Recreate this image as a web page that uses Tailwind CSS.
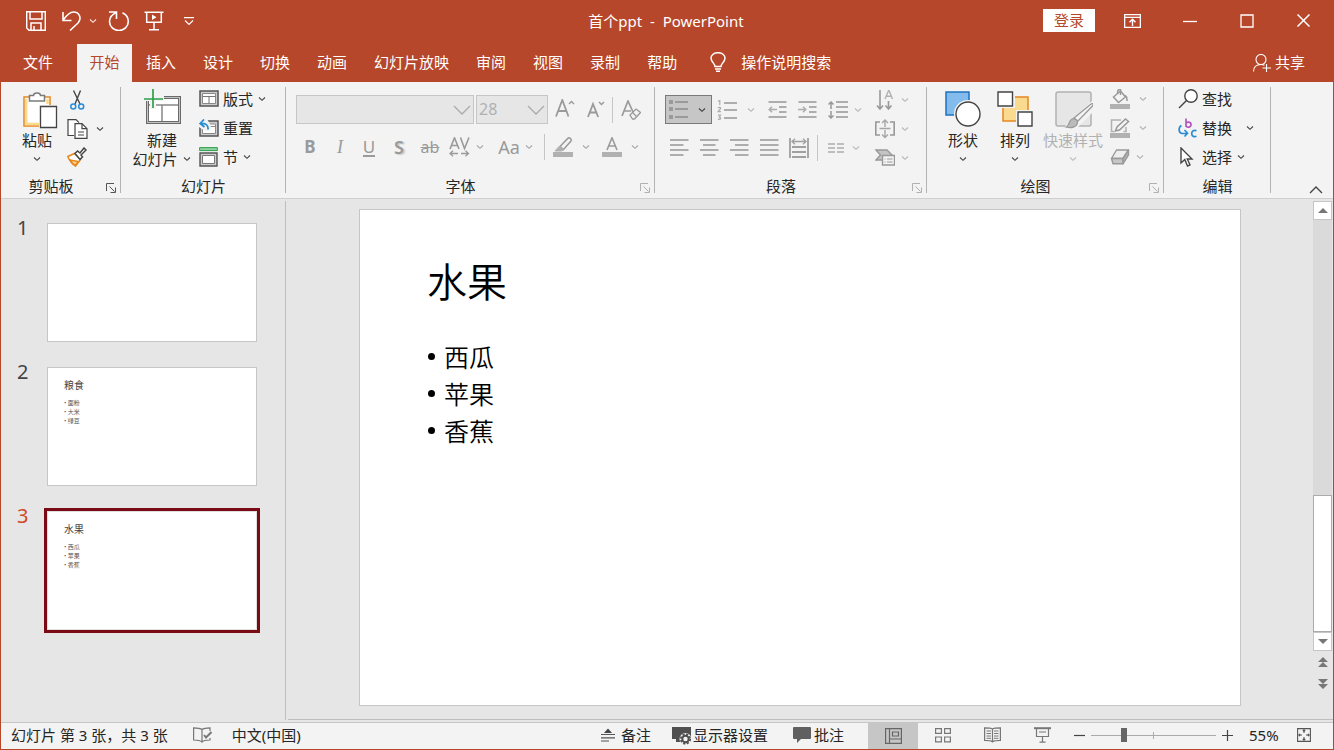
<!DOCTYPE html>
<html lang="zh-CN">
<head>
<meta charset="utf-8">
<title>首个ppt - PowerPoint</title>
<script src="https://cdn.jsdelivr.net/npm/@tailwindcss/browser@4"></script>
</head>
<body class="min-h-screen flex flex-col bg-[#e6e6e6] font-['Noto_Sans','Noto_Sans_CJK_SC',sans-serif] text-[15px] leading-5 text-[#262626]">

<svg class="hidden">
  <symbol id="chev" viewBox="0 0 10 6"><path d="M2 1.500 5 4.300 8 1.500" fill="none" stroke="currentColor" stroke-width="1.100" stroke-opacity=".85"/></symbol>
  <symbol id="launch" viewBox="0 0 10 10"><path d="M.5 8V.5H8M3.500 3.500l5 5M9.500 4.500v5h-5" fill="none" stroke="currentColor"/></symbol>
</svg>

<!-- Title bar -->
<header class="bg-[#b7472a] text-white">
  <div class="h-11 flex items-center pb-[3px]">
    <div class="flex-1 flex items-center pl-[26px]">
      <button aria-label="保存" class="w-5"><svg class="w-5 h-5 block" viewBox="0 0 20 20" fill="none" stroke="#fff" stroke-width="1.500"><path d="M.7.7h18.600v18.600H3L.7 17zM4 .7v7.300h12V.7M5 19v-7h10v7M8 19v-4"/></svg></button>
      <button aria-label="撤消" class="w-5 ml-4"><svg class="w-5 h-5 block" viewBox="0 0 20 20" fill="none" stroke="#fff" stroke-width="1.600"><path d="M1 1v8.500h8.500M1 9.300C5 3.500 8 1 11.500 1c6 0 8.500 6.500 4.500 11L8 19.500"/></svg></button>
      <button aria-label="撤消选项" class="w-[10px] ml-[6px]"><svg class="w-[10px] h-[6px] block"><use href="#chev"/></svg></button>
      <button aria-label="重复" class="w-[22px] ml-[10px]"><svg class="w-[22px] h-5 block" viewBox="0 0 22 20" fill="none" stroke="#fff" stroke-width="1.600"><path d="M1 1h7.500v7M8.300 1.500C4 3.500 1.500 6.500 1.500 10.500a9.400 9 0 0 0 18.800 0C20.300 7 18 3.500 14.500 1.800"/></svg></button>
      <button aria-label="从头开始放映" class="w-5 ml-[14px]"><svg class="w-5 h-5 block" viewBox="0 0 20 20" fill="none" stroke="#fff" stroke-width="1.500"><path d="M.5 1.200h19M2.700 1.500v9.800h14.600V1.500M10 11.300v7.400M5 18.800h10"/><path d="M8 3.500 12.500 6.300 8 9z" fill="#fff" stroke="none"/></svg></button>
      <button aria-label="自定义快速访问工具栏" class="w-[10px] ml-5"><svg class="w-[10px] h-2 block" viewBox="0 0 10 8" fill="none" stroke="#fff" stroke-width="1.100"><path d="M0 .6h10M1 3.500l4 4 4-4"/></svg></button>
    </div>
    <h1 class="whitespace-pre mr-7">首个ppt  -  PowerPoint</h1>
    <div class="flex-1 flex items-center justify-end">
      <button class="bg-white text-[#b7472a] w-[52px] h-[23px] leading-[23px]">登录</button>
      <button aria-label="功能区显示选项" class="ml-[29px]"><svg class="w-[17px] h-[14px] block" viewBox="0 0 17 14" fill="none" stroke="#fff" stroke-width="1.400"><path d="M.6.6h15.800v12.800H.6zM.6 3.400h15.800M8.500 12V5.500M5.500 8.300l3-3 3 3"/></svg></button>
      <button aria-label="最小化" class="ml-[42px]"><svg class="w-[14px] h-[14px] block" viewBox="0 0 14 14" stroke="#fff" stroke-width="1.300"><path d="M0 7.500h14"/></svg></button>
      <button aria-label="最大化" class="ml-[43px]"><svg class="w-[14px] h-[14px] block" viewBox="0 0 14 14" fill="none" stroke="#fff" stroke-width="1.300"><path d="M1 1h12v12H1z"/></svg></button>
      <button aria-label="关闭" class="ml-[43px] mr-6"><svg class="w-[13px] h-[13px] block" viewBox="0 0 13 13" stroke="#fff" stroke-width="1.500"><path d="M.5.5l12 12M12.500.5l-12 12"/></svg></button>
    </div>
  </div>
  <!-- Ribbon tabs -->
  <nav class="h-[38px] flex items-stretch pl-[23px] whitespace-nowrap [&>button]:pb-[2px]">
    <button class="w-[30px]">文件</button>
    <button class="w-[55px] ml-6 bg-[#f3f3f3] text-[#b7472a]">开始</button>
    <button class="pl-[14px] pr-[13px]">插入</button>
    <button class="pl-[14px] pr-[13px]">设计</button>
    <button class="pl-[14px] pr-[13px]">切换</button>
    <button class="pl-[14px] pr-[13px]">动画</button>
    <button class="pl-[14px] pr-[13px]">幻灯片放映</button>
    <button class="pl-[14px] pr-[13px]">审阅</button>
    <button class="pl-[14px] pr-[13px]">视图</button>
    <button class="pl-[14px] pr-[13px]">录制</button>
    <button class="pl-[14px] pr-[13px]">帮助</button>
    <button class="flex items-center ml-5"><svg class="w-4 h-5 mr-[15px]" viewBox="0 0 16 20" fill="none" stroke="#fff" stroke-width="1.500"><path d="M5 14.500c0-3-4-4.500-4-8.500 0-3 3-5.300 7-5.300s7 2.300 7 5.300c0 4-4 5.500-4 8.500zM5 17h6M6 19.200h4"/></svg>操作说明搜索</button>
    <button class="flex items-center ml-auto mr-[29px]"><svg class="w-[18px] h-[18px] mr-1 mt-[2px]" viewBox="0 0 18 18" fill="none" stroke="#fff" stroke-width="1.100"><circle cx="8" cy="5.500" r="5"/><path d="M.6 17.500c0-4.500 3-7 7.400-7 1.500 0 2.500.3 3.500.8M13.500 10v8M9.500 14h8.500"/></svg>共享</button>
  </nav>
</header>

<div class="flex-1 flex flex-col border-x border-b border-[#b7472a]">

<!-- Ribbon -->
<section class="h-[117px] flex bg-[#f3f3f3] border-b border-[#cfcfcf] whitespace-nowrap">

  <div class="w-[120px] flex flex-col pt-[3px] relative">
    <div class="h-[87px] flex">
      <button class="w-[34px] ml-[19px] flex flex-col items-center pt-[5px]">
        <svg class="w-9 h-10 ml-[5px]" viewBox="0 0 36 40" fill="none"><path d="M2 7h26v29H2z" fill="#fff" stroke="#e8871e" stroke-width="1.500"/><path d="M4.200 9v25h14" stroke="#fbd98b" stroke-width="2.500"/><path d="M25.500 9v5" stroke="#fbd98b" stroke-width="2.500"/><path d="M7.500 5.500h4c0-3.500 7-3.500 7 0h4V11h-15z" fill="#fff" stroke="#7a7a7a" stroke-width="1.500"/><path d="M17 15h18v24H17z" fill="#f3f3f3"/><path d="M18.500 16.500h16v21h-16z" fill="#fff" stroke="#444" stroke-width="1.300"/></svg>
        <span>粘贴</span><svg class="w-[10px] h-[6px] mt-[6px]"><use href="#chev"/></svg>
      </button>
      <div class="w-10 ml-3 flex flex-col">
        <button aria-label="剪切" class="h-[29px] pl-1"><svg class="w-[15px] h-5 block" viewBox="0 0 15 20" fill="none"><path d="M3.500.5 10 14M10.500.5 5 14" stroke="#444" stroke-width="1.400"/><circle cx="3.300" cy="16.500" r="2.500" stroke="#2a8dd4" stroke-width="1.500"/><circle cx="11.200" cy="16.500" r="2.500" stroke="#2a8dd4" stroke-width="1.500"/></svg></button>
        <div class="h-[29px] flex items-center"><button aria-label="复制" class="pl-px"><svg class="w-[21px] h-5 block" viewBox="0 0 21 20" fill="#fff" stroke="#444" stroke-width="1.200"><path d="M7 16.500H1V.7h8l3 3"/><path d="M8 4.700h7l5 5V19.300H8z"/><path d="M15 4.700v5h5M11 13h6M11 16h6" fill="none"/></svg></button><button aria-label="复制选项" class="ml-[7px]"><svg class="w-[10px] h-[6px] block"><use href="#chev"/></svg></button></div>
        <button aria-label="格式刷" class="h-[29px] pl-px pb-[2px]"><svg class="w-5 h-5 block" viewBox="0 0 20 20" stroke-width="1.500"><path d="M.8 9.500 7.500 6.500l6 6L8.500 19C5.500 17.500 3 14.500.8 9.500z" fill="#fff" stroke="#e8871e"/><path d="M3 13l8 1.500L8.500 18.500C6 17.500 4.500 15.500 3 13z" fill="#fbd98b" stroke="#e8871e"/><path d="m8 6.500 2.500-2.500L13 6l4-5 2 2-5 5 1.500 2-2.500 2.500z" fill="#fff" stroke="#444"/></svg></button>
      </div>
    </div>
    <div class="h-[26px] flex items-center pt-[2px]"><span class="flex-1 text-center">剪贴板</span><button aria-label="剪贴板选项" class="w-5 pl-[5px] pt-1"><svg class="w-[10px] h-[10px] block text-[#555]"><use href="#launch"/></svg></button></div>
  </div>

  <div class="w-[165px] flex flex-col pt-[3px] relative before:absolute before:left-[-1px] before:top-[5px] before:bottom-[5px] before:w-px before:bg-[#b4b4b4]">
    <div class="h-[87px] flex">
      <button class="w-[60px] ml-[11px] flex flex-col items-center pt-[3px]">
        <svg class="w-10 h-10 mb-[2px]" viewBox="0 0 40 40" fill="none"><path d="M5.500 9.500h32v25h-32z" fill="#fff" stroke="#6a6a6a" stroke-width="3"/><path d="M5.500 9.500h32v25h-32z" stroke="#c4c4c4" stroke-width="1"/><path d="M7 17h29M20 17v16" stroke="#888" stroke-width="1.500"/><path d="M0 7h22v6H0zM8 1h6v20H8z" fill="#f3f3f3"/><path d="M2 11h19M11 1v19" stroke="#2fa04a" stroke-width="1.700"/></svg>
        <span>新建</span><span class="flex items-center leading-[18px]">幻灯片<svg class="w-[10px] h-[6px] ml-1"><use href="#chev"/></svg></span>
      </button>
      <div class="ml-[7px] flex flex-col [&>button]:pb-[2px]">
        <button class="h-[29px] flex items-center"><svg class="w-5 h-[17px] mr-1" viewBox="0 0 20 17" fill="none"><path d="M1 1h18v15H1z" fill="#ccc" stroke="#555" stroke-width="1.500"/><path d="M3.500 3.500h13v10h-13z" fill="#fff" stroke="#888"/><path d="M3.500 6.500h13M10 6.500v7" stroke="#777"/></svg>版式<svg class="w-[10px] h-[6px] ml-1"><use href="#chev"/></svg></button>
        <button class="h-[29px] flex items-center"><svg class="w-5 h-[18px] mr-1" viewBox="0 0 20 18" fill="none"><path d="M1 2h18v15H1z" fill="#ccc" stroke="#555" stroke-width="1.500"/><path d="M3.500 5h13v9.500h-13z" fill="#fff" stroke="#888"/><path d="M11 7.500h5" stroke="#888"/><path d="M0 0h8l4 7-2 5H6L0 8z" fill="#f3f3f3"/><path d="M5 .5 1.200 4.500 5.500 8M1.500 4.500c5-.5 8 1.500 7.500 6" stroke="#2a8dd4" stroke-width="1.800"/></svg>重置</button>
        <button class="h-[29px] flex items-center"><svg class="w-[19px] h-5 mr-[5px]" viewBox="0 0 19 20" fill="none"><path d="M.6.6h17.800v3H.6z" fill="#8fd0a0" stroke="#2fa04a"/><path d="M1 6h17v13H1z" fill="#ccc" stroke="#555" stroke-width="1.400"/><path d="M3.500 8.500h12v8h-12z" fill="#fff" stroke="#777"/></svg>节<svg class="w-[10px] h-[6px] ml-1"><use href="#chev"/></svg></button>
      </div>
    </div>
    <div class="h-[26px] flex items-center pt-[2px]"><span class="flex-1 text-center">幻灯片</span></div>
  </div>

  <div class="w-[369px] flex flex-col pt-[3px] relative before:absolute before:left-[-1px] before:top-[5px] before:bottom-[5px] before:w-px before:bg-[#b4b4b4]">
    <div class="h-[87px] pt-[10px] text-[#9a9a9a]">
      <div class="flex items-center h-[29px] pl-[10px]">
        <div class="relative w-[178px] h-[29px]"><select aria-label="字体" disabled class="appearance-none w-full h-full bg-[#e6e6e6] border border-[#c6c6c6] block"><option></option></select><svg class="absolute right-[3px] top-[10px] w-[18px] h-[10px]" viewBox="0 0 18 10"><path d="M1 1l8 8 8-8" fill="none" stroke="#ababab" stroke-width="1.300"/></svg></div>
        <div class="relative w-[72px] h-[29px] ml-[2px]"><select aria-label="字号" disabled class="appearance-none w-full h-full bg-[#e6e6e6] border border-[#c6c6c6] pl-[2px] pb-[2px] block opacity-100 text-[#b1b1b1] text-[16px]"><option>28</option></select><svg class="absolute right-[3px] top-[10px] w-[18px] h-[10px]" viewBox="0 0 18 10"><path d="M1 1l8 8 8-8" fill="none" stroke="#ababab" stroke-width="1.300"/></svg></div>
        <button aria-label="增大字号" class="ml-[7px] pb-[3px]"><svg class="w-5 h-[18px] block" viewBox="0 0 20 18" fill="none" stroke="currentColor" stroke-width="1.800"><path d="M1 17.500 7.300 1 13.500 17.500M3.200 12h8.300"/><path d="m14 5 2.500-2.500L19 5" stroke-width="1.400"/></svg></button>
        <button aria-label="减小字号" class="ml-3 pb-px"><svg class="w-[18px] h-[18px] block" viewBox="0 0 18 18" fill="none" stroke="currentColor" stroke-width="1.800"><path d="M1 17 6 4l5.200 13M2.800 12.500h6.500"/><path d="m12 2 2.500 2.500L17 2" stroke-width="1.400"/></svg></button>
        <span class="w-px h-[26px] bg-[#c6c6c6] ml-[7px]"></span>
        <button aria-label="清除所有格式" class="ml-2"><svg class="w-5 h-5 block" viewBox="0 0 20 20" fill="none" stroke="currentColor" stroke-width="1.700"><path d="M1 16 7 1l5 11M3 11h7"/><path d="m9 15 6-6 4.500 3.500-6 6.500h-2z" stroke-width="1.300" fill="#f3f3f3"/><path d="m11.500 12.500 4 4" stroke-width="1.300"/></svg></button>
      </div>
      <div class="flex items-center h-[29px] mt-[8px] pl-[9px] [&>button]:text-center text-[18px]">
        <button aria-label="加粗" class="w-[30px] font-bold text-[17px]">B</button>
        <button aria-label="倾斜" class="w-[30px] italic font-['Liberation_Serif',serif]">I</button>
        <button aria-label="下划线" class="w-[30px] pr-[2px]"><span class="inline-block border-b-2 border-current leading-4 text-[17px]">U</span></button>
        <button aria-label="文字阴影" class="w-[30px] pr-[2px] font-semibold [text-shadow:2px_1px_1px_#ccc]">S</button>
        <button aria-label="删除线" class="w-[30px] line-through text-[16px]">ab</button>
        <button aria-label="字符间距" class="w-[30px] pl-1"><svg class="w-[22px] h-5 block" viewBox="0 0 22 20" fill="none" stroke="currentColor" stroke-width="1.600"><path d="M1 12 5.500.8 10 12M2.500 8.500h6M11.500.5 15.500 11.500 20 .5"/><path d="M1 16.500h8M4 13.800l-3 2.700 3 2.700M12 16.500h7M16.500 13.800l3 2.700-3 2.700" stroke-width="1.300"/></svg></button>
        <svg class="w-[10px] h-[6px]"><use href="#chev"/></svg>
        <button aria-label="更改大小写" class="w-[30px] ml-[9px]">Aa</button>
        <svg class="w-[10px] h-[6px]"><use href="#chev"/></svg>
        <span class="w-px h-[26px] bg-[#c6c6c6] ml-[10px]"></span>
        <button aria-label="文本突出显示颜色" class="ml-2"><svg class="w-5 h-5 block" viewBox="0 0 20 20" fill="none" stroke="currentColor"><path d="M7 9.500 15 1.200c1.500-1 4 1 3 2.800L10.500 12.500z" stroke-width="1.500"/><path d="M2 14l4.500-5 4 4-2 1z" fill="#b1b1b1" stroke="#b1b1b1"/><path d="M0 15h20v5H0z" fill="#b1b1b1" stroke="none"/></svg></button>
        <svg class="w-[10px] h-[6px] ml-2"><use href="#chev"/></svg>
        <button aria-label="字体颜色" class="ml-[11px]"><svg class="w-5 h-5 block" viewBox="0 0 20 20" fill="none" stroke="currentColor" stroke-width="1.600"><path d="M5 13 10 .8 15 13M6.800 9h6.500"/><path d="M0 15h20v5H0z" fill="#b1b1b1" stroke="none"/></svg></button>
        <svg class="w-[10px] h-[6px] ml-2"><use href="#chev"/></svg>
      </div>
    </div>
    <div class="h-[26px] flex items-center pt-[2px]"><span class="flex-1 text-center">字体</span><button aria-label="字体选项" class="w-5 pl-[5px] pt-1"><svg class="w-[10px] h-[10px] block text-[#b1b1b1]"><use href="#launch"/></svg></button></div>
  </div>

  <div class="w-[272px] flex flex-col pt-[3px] relative before:absolute before:left-[-1px] before:top-[5px] before:bottom-[5px] before:w-px before:bg-[#b4b4b4]">
    <div class="h-[87px] flex text-[#adadad]">
      <div class="w-[214px] pt-[10px]">
        <div class="flex items-center h-[29px] pl-[10px]">
          <button aria-label="项目符号" class="w-[47px] h-[29px] border border-[#7a7a7a] bg-[#c6c6c6] flex items-center pl-[3px]"><svg class="w-5 h-5" viewBox="0 0 20 20" fill="#9a9a9a"><path d="M0 0h4v4H0zM0 7h4v4H0zM0 15h4v4H0zM6 1h13v2H6zM6 8h13v2H6zM6 16h13v2H6z"/></svg><svg class="w-[10px] h-[6px] ml-2 text-[#262626]"><use href="#chev"/></svg></button>
          <button aria-label="编号" class="ml-[5px]"><svg class="w-[22px] h-[22px] block" viewBox="0 0 22 22" fill="currentColor"><path d="M7 3h13v2H7zM7 10h13v2H7zM7 18h13v2H7z"/><path d="M1 2.500 2.800 1.500V6M1 9c1-1.200 3-.8 2.500.7L1 12.700h3M1 16.200h2.500l-1.200 2c2 0 1.800 2.800-1.300 2" fill="none" stroke="currentColor" stroke-width="1.200"/></svg></button>
          <svg class="w-[10px] h-[6px] ml-[7px]"><use href="#chev"/></svg>
          <button aria-label="降低列表级别" class="ml-3"><svg class="w-[19px] h-[18px] block" viewBox="0 0 19 18" fill="none" stroke="currentColor" stroke-width="2"><path d="M.5 1h18M11 6h7.500M11 11h7.500M.5 16h18"/><path d="M1 8.500h8M4 5.700 1.200 8.500 4 11.300" stroke-width="1.500"/></svg></button>
          <button aria-label="提高列表级别" class="ml-[11px]"><svg class="w-[19px] h-[18px] block" viewBox="0 0 19 18" fill="none" stroke="currentColor" stroke-width="2"><path d="M.5 1h18M11 6h7.500M11 11h7.500M.5 16h18"/><path d="M0 8.500h8M5 5.700 7.800 8.500 5 11.300" stroke-width="1.500"/></svg></button>
          <button aria-label="行距" class="ml-[11px]"><svg class="w-5 h-[18px] block" viewBox="0 0 20 18" fill="none" stroke="currentColor" stroke-width="2"><path d="M8 1h12M8 6h12M8 11h12M8 16h12"/><path d="M3 1v7M.5 3.500 3 1l2.500 2.500M3 10v7M.5 14.500 3 17l2.500-2.500" stroke="#999" stroke-width="1.500"/></svg></button>
          <svg class="w-[10px] h-[6px] ml-[5px]"><use href="#chev"/></svg>
        </div>
        <div class="flex items-center h-[29px] mt-[9px] pl-[15px] gap-[11px]">
          <button aria-label="左对齐"><svg class="w-[19px] h-[18px] block" viewBox="0 0 19 18" stroke="currentColor" stroke-width="2"><path d="M0 1h18.500M0 6h13.500M0 11h18.500M0 16h13.500"/></svg></button>
          <button aria-label="居中"><svg class="w-[19px] h-[18px] block" viewBox="0 0 19 18" stroke="currentColor" stroke-width="2"><path d="M0 1h18.500M3 6h12.500M0 11h18.500M3 16h12.500"/></svg></button>
          <button aria-label="右对齐"><svg class="w-[19px] h-[18px] block" viewBox="0 0 19 18" stroke="currentColor" stroke-width="2"><path d="M0 1h18.500M5 6h13.500M0 11h18.500M5 16h13.500"/></svg></button>
          <button aria-label="两端对齐"><svg class="w-[19px] h-[18px] block" viewBox="0 0 19 18" stroke="currentColor" stroke-width="2"><path d="M0 1h18.500M0 6h18.500M0 11h18.500M0 16h18.500"/></svg></button>
          <button aria-label="分散对齐" class="-ml-px"><svg class="w-5 h-5 block" viewBox="0 0 20 20" fill="none" stroke="#a0a0a0" stroke-width="1.800"><path d="M1 0v20M19 0v20M3 9h14M3 14h14M3 19h14"/><path d="M3 3.500h14M6 .8 3 3.500l3 2.700M14 .8l3 2.700-3 2.700" stroke-width="1.300"/></svg></button>
          <div class="flex items-center -ml-[3px]">
            <span class="w-px h-[26px] bg-[#c6c6c6]"></span>
            <button aria-label="分栏" class="ml-[10px]"><svg class="w-4 h-[10px] block" viewBox="0 0 16 10" stroke="currentColor" stroke-width="1.600"><path d="M0 1h7M9 1h7M0 5h7M9 5h7M0 9h7M9 9h7"/></svg></button>
            <svg class="w-[10px] h-[6px] ml-[7px]"><use href="#chev"/></svg>
          </div>
        </div>
      </div>
      <div class="pl-[6px]">
        <div class="h-[29px] flex items-center"><button aria-label="文字方向"><svg class="w-5 h-5 block" viewBox="0 0 20 20" fill="none" stroke="#999" stroke-width="1.600"><path d="M5 0v18M2 15.500l3 3.500 3-3.500M13.500 11v8M10.500 15.500l3 3.500 3-3.500"/><path d="M10 9 13.800 0 17.500 9M11.200 6.200h5" stroke="#b1b1b1" stroke-width="1.400"/></svg></button><svg class="w-[10px] h-[6px] ml-[5px]"><use href="#chev"/></svg></div>
        <div class="h-[29px] flex items-center"><button aria-label="对齐文本"><svg class="w-5 h-5 block" viewBox="0 0 20 20" fill="none" stroke="#999" stroke-width="1.600"><path d="M5 3H.8v13H5M15 3h4.200v13H15"/><path d="M4.500 9.500h11M10 1v7M7 4l3-3 3 3M10 11v7.500M7 15.500l3 3 3-3" stroke="#a6a6a6" stroke-width="1.400"/></svg></button><svg class="w-[10px] h-[6px] ml-[5px]"><use href="#chev"/></svg></div>
        <div class="h-[29px] flex items-center"><button aria-label="转换为 SmartArt"><svg class="w-5 h-[17px] block" viewBox="0 0 20 17" fill="none" stroke="#999" stroke-width="1.400"><path d="M1 1h11l5 5-4 5H1l4.500-5z" fill="#c4c4c4"/><path d="M7.500 6.500h12v9.500h-12z" fill="#f3f3f3"/><path d="M9.500 10h1M12 10h5.500M9.500 13h1M12 13h5.500" stroke-width="1"/></svg></button><svg class="w-[10px] h-[6px] ml-[5px]"><use href="#chev"/></svg></div>
      </div>
    </div>
    <div class="h-[26px] flex items-center pt-[2px]"><span class="flex-1 text-center">段落</span><button aria-label="段落选项" class="w-5 pl-[5px] pt-1"><svg class="w-[10px] h-[10px] block text-[#b1b1b1]"><use href="#launch"/></svg></button></div>
  </div>

  <div class="w-[237px] flex flex-col pt-[3px] relative before:absolute before:left-[-1px] before:top-[5px] before:bottom-[5px] before:w-px before:bg-[#b4b4b4]">
    <div class="h-[87px] flex">
      <button class="w-[38px] ml-[17px] flex flex-col items-center pt-[5px]"><svg class="w-9 h-10" viewBox="0 0 36 40"><path d="M1 2h23v23H1z" fill="#83bcec" stroke="#1e72bd" stroke-width="1.500"/><circle cx="23" cy="24" r="14" fill="#f3f3f3"/><circle cx="23" cy="24" r="12" fill="#fff" stroke="#444" stroke-width="1.400"/></svg><span>形状</span><svg class="w-[10px] h-[6px] mt-[6px]"><use href="#chev"/></svg></button>
      <button class="w-[38px] ml-[14px] flex flex-col items-center pt-[5px]"><svg class="w-9 h-10" viewBox="0 0 36 40"><path d="M6 7h25v24H6z" fill="#f9da8e" stroke="#e8871e" stroke-width="1.500"/><path d="M0 0h18v18H0zM19 20h17v19H19z" fill="#f3f3f3"/><path d="M1 2h14.500v14H1zM21 22h14v14H21z" fill="#fff" stroke="#444" stroke-width="1.400"/></svg><span>排列</span><svg class="w-[10px] h-[6px] mt-[6px]"><use href="#chev"/></svg></button>
      <button class="w-[60px] ml-[9px] flex flex-col items-center pt-[5px] text-[#b1b1b1]"><svg class="w-[38px] h-10 ml-[2px]" viewBox="0 0 38 40"><path d="M3 2h31a2 2 0 0 1 2 2v30a2 2 0 0 1-2 2H3a2 2 0 0 1-2-2V4a2 2 0 0 1 2-2z" fill="#e6e6e6" stroke="#b1b1b1" stroke-width="1.500"/><path d="M8 38 38 10v12L22 38z" fill="#f3f3f3"/><path d="M11 37c4-1 2-6 6-8 3-1 6 1 5.500 4-.7 4-6 5.500-11.500 4z" fill="#bbb" stroke="#999" stroke-width="1.200"/><path d="M19 28 36 14c2-1 2.500 0 1.500 2L23 31z" fill="#f3f3f3" stroke="#999" stroke-width="1.300"/></svg><span>快速样式</span><svg class="w-[10px] h-[6px] mt-[6px]"><use href="#chev"/></svg></button>
      <div class="ml-[7px] text-[#a6a6a6] [&>div]:pb-px">
        <div class="h-[29px] flex items-center"><button aria-label="形状填充"><svg class="w-5 h-5 block" viewBox="0 0 20 20" fill="none" stroke="#999" stroke-width="1.500"><path d="M3.500 8 10.500 2l5 6-7 5.500z"/><path d="M10.500 6V.7C8.500.2 7.500 1 7.500 4.500M15 6.500c2 1 2.300 2.500 2 5.500"/><path d="M0 15h20v5H0z" fill="#b1b1b1" stroke="none"/></svg></button><svg class="w-[10px] h-[6px] ml-2"><use href="#chev"/></svg></div>
        <div class="h-[29px] flex items-center"><button aria-label="形状轮廓"><svg class="w-5 h-5 block" viewBox="0 0 20 20" fill="none" stroke="#999" stroke-width="1.500"><path d="M11 2H1.500v11.500h3M13.500 13.500H16V9" stroke="#b1b1b1"/><path d="M5.500 13l1.500-4L15.500 1l3 2.500L9.500 12z"/><path d="M0 15h20v5H0z" fill="#b1b1b1" stroke="none"/></svg></button><svg class="w-[10px] h-[6px] ml-2"><use href="#chev"/></svg></div>
        <div class="h-[29px] flex items-center"><button aria-label="形状效果"><svg class="w-5 h-4 block" viewBox="0 0 20 16" stroke="#999" stroke-width="1.400" stroke-linejoin="round"><path d="M6.500 1h12L13 9.500H1.500z" fill="#eee"/><path d="M1.500 9.500H13v5.300H3z" fill="#c6c6c6"/><path d="M18.500 1v5L13 14.800V9.500z" fill="#b1b1b1"/></svg></button><svg class="w-[10px] h-[6px] ml-[5px]"><use href="#chev"/></svg></div>
      </div>
    </div>
    <div class="h-[26px] flex items-center pt-[2px]"><span class="flex-1 text-center">绘图</span><button aria-label="绘图选项" class="w-5 pl-[5px] pt-1"><svg class="w-[10px] h-[10px] block text-[#b1b1b1]"><use href="#launch"/></svg></button></div>
  </div>

  <div class="w-[107px] flex flex-col pt-[3px] relative before:absolute before:left-[-1px] before:top-[5px] before:bottom-[5px] before:w-px before:bg-[#b4b4b4] after:absolute after:right-0 after:top-[5px] after:bottom-[5px] after:w-px after:bg-[#b4b4b4]">
    <div class="h-[87px] pl-[14px] [&>button]:pb-[2px]">
      <button class="h-[29px] flex items-center"><svg class="w-5 h-5 mr-1" viewBox="0 0 20 20" fill="none" stroke="#444" stroke-width="1.400"><circle cx="13" cy="7" r="6.200" fill="#fff"/><path d="M8.500 11.500 1 19"/></svg>查找</button>
      <button class="h-[29px] flex items-center"><svg class="w-5 h-5 mr-1" viewBox="0 0 20 20" fill="none" stroke-width="1.700"><path d="M8 .5V9M8 5.500c1-2.300 5-1.800 5 1S9 10.300 8 7.800" stroke="#b455c0"/><path d="M18.500 12.700c-2.500-1-4.800.3-4.800 2.800s2.300 3.800 4.800 2.800M3.500 7.500C.5 9 0 14.500 4 15.500h4.500M6.500 12l3 3.300-3 3.200" stroke="#2a8dd4"/></svg>替换<svg class="w-[10px] h-[6px] ml-[13px]"><use href="#chev"/></svg></button>
      <button class="h-[29px] flex items-center"><svg class="w-5 h-5 mr-1" viewBox="0 0 20 20" fill="#fff" stroke="#444" stroke-width="1.400"><path d="M3 1v15l3.800-3.500L9.500 19l2.500-1.200L9.300 12H14z"/></svg>选择<svg class="w-[10px] h-[6px] ml-1"><use href="#chev"/></svg></button>
    </div>
    <div class="h-[26px] flex items-center pt-[2px]"><span class="flex-1 text-center">编辑</span></div>
  </div>

  <button aria-label="折叠功能区" class="ml-auto mr-[10px] mb-1 self-end"><svg class="w-[14px] h-2 block" viewBox="0 0 14 8"><path d="m1 7 6-6 6 6" fill="none" stroke="#444" stroke-width="1.400"/></svg></button>
</section>

<!-- Workspace -->
<main class="flex-1 flex">
  <aside class="w-[285px] border-r border-[#bebebe] mt-[2px] mb-[2px] pt-[22px]">
    <ol class="flex flex-col gap-[25px] text-[#444]">
      <li class="flex"><span class="w-[46px] pl-4 text-[20px] leading-[10px]">1</span><div class="w-[210px] h-[119px] bg-white border border-[#c6c6c6]"></div></li>
      <li class="flex"><span class="w-[46px] pl-4 text-[20px] leading-[10px]">2</span>
        <div class="w-[210px] h-[119px] bg-white border border-[#c6c6c6] pl-4 pt-[10px]"><p class="text-[10px] leading-[14px]">粮食</p><ul class="mt-[7px] text-[6px] leading-[9px] text-[#555]"><li>• 面粉</li><li>• 大米</li><li>• 绿豆</li></ul></div></li>
      <li class="flex"><span class="w-[46px] pl-4 text-[20px] leading-[10px] text-[#d24726]">3</span>
        <div class="w-[210px] h-[119px] bg-white border border-[#e0e0e0] outline-3 outline-[#7a0a14] pl-4 pt-[10px]"><p class="text-[10px] leading-[14px]">水果</p><ul class="mt-[7px] text-[6px] leading-[9px] text-[#555]"><li>• 西瓜</li><li>• 苹果</li><li>• 香蕉</li></ul></div></li>
    </ol>
  </aside>
  <section class="flex-1 flex flex-col ml-[2px]">
    <div class="flex-1 flex">
      <div class="flex-1 pl-[71px] pr-[72px] pt-[10px]">
        <article class="w-full aspect-[882/497] bg-white border border-[#c6c6c6] pl-[67px] pt-[45px] text-black font-['Noto_Sans_CJK_SC',sans-serif] font-[350]">
          <h2 class="text-[40px] leading-[50px]">水果</h2>
          <ul class="mt-[33px] text-[25px] leading-[37px]">
            <li class="flex items-center"><span class="w-[7px] h-[7px] rounded-full bg-black ml-px mr-[9px]"></span>西瓜</li>
            <li class="flex items-center"><span class="w-[7px] h-[7px] rounded-full bg-black ml-px mr-[9px]"></span>苹果</li>
            <li class="flex items-center"><span class="w-[7px] h-[7px] rounded-full bg-black ml-px mr-[9px]"></span>香蕉</li>
          </ul>
        </article>
      </div>
      <div class="w-5 flex flex-col pt-[2px] pb-[26px] pr-px text-[#777]">
        <button aria-label="向上滚动" class="h-[19px] bg-white border border-[#c6c6c6] flex items-center justify-center"><svg class="w-[10px] h-[5px]" viewBox="0 0 10 5"><path d="M0 5 5 0l5 5z" fill="currentColor"/></svg></button>
        <div class="flex-1 bg-[#dadada] flex flex-col justify-end"><div class="h-[137px] bg-white border border-[#ababab]"></div></div>
        <button aria-label="向下滚动" class="h-[19px] bg-white border border-[#c6c6c6] flex items-center justify-center"><svg class="w-[10px] h-[5px]" viewBox="0 0 10 5"><path d="M0 0l5 5 5-5z" fill="currentColor"/></svg></button>
        <button aria-label="上一张幻灯片" class="h-[22px] flex items-center justify-center"><svg class="w-[10px] h-[10px]" viewBox="0 0 10 10"><path d="M0 5 5 0l5 5zM0 10l5-5 5 5z" fill="currentColor"/></svg></button>
        <button aria-label="下一张幻灯片" class="h-[22px] -mb-[2px] flex items-center justify-center"><svg class="w-[10px] h-[10px]" viewBox="0 0 10 10"><path d="M0 0l5 5 5-5zM0 5l5 5 5-5z" fill="currentColor"/></svg></button>
      </div>
    </div>
    <div class="h-px bg-[#bebebe] mb-[2px]"></div>
  </section>
</main>

<!-- Status bar -->
<footer class="h-[27px] flex items-center bg-[#f3f3f3] border-t border-[#c6c6c6] pl-[10px] pr-[22px] pb-[2px] whitespace-nowrap">
  <span>幻灯片 第 3 张，共 3 张</span>
  <button aria-label="拼写检查" class="ml-[25px]"><svg class="w-[19px] h-4 block" viewBox="0 0 19 16" fill="none" stroke="#777" stroke-width="1.200"><path d="M9 2.500C7 .8 4 .8.600.8V13C4 13 7 13 9 15c1-1.200 3-2 8-2v-2M9 2.500C11 .8 14 .8 17 .8V4M9 2.500V15"/><path d="m11 8 2 2.500L18.500 5" stroke-width="2"/></svg></button>
  <button class="ml-[20px]">中文(中国)</button>
  <div class="ml-auto flex items-center self-stretch">
    <button class="flex items-center"><svg class="w-[14px] h-[14px] mr-[6px]" viewBox="0 0 14 14"><path d="M3 5 7 .5 11 5z" fill="#444"/><path d="M0 6.500h14M0 9.800h14M0 13h8" stroke="#555" stroke-width="1.200"/></svg>备注</button>
    <button class="flex items-center ml-[21px]"><svg class="w-5 h-[19px] mr-px" viewBox="0 0 20 19"><path d="M0 1h19v12H0zM4 13h7v3H4z" fill="#505050"/><circle cx="13.500" cy="13" r="6" fill="#f3f3f3"/><circle cx="13.500" cy="13" r="3.200" fill="none" stroke="#505050" stroke-width="2"/><circle cx="13.500" cy="13" r="4.700" fill="none" stroke="#505050" stroke-width="1.800" stroke-dasharray="2.200 1.490"/></svg>显示器设置</button>
    <button class="flex items-center ml-[25px]"><svg class="w-[18px] h-4 mr-[3px]" viewBox="0 0 18 16"><path d="M1 0h16a1 1 0 0 1 1 1v10a1 1 0 0 1-1 1H8l-4 4v-4H1a1 1 0 0 1-1-1V1a1 1 0 0 1 1-1z" fill="#606060"/></svg>批注</button>
    <button aria-label="普通视图" class="ml-6 w-[50px] self-stretch -mb-[2px] bg-[#c6c6c6] flex items-center justify-center"><svg class="w-[17px] h-4" viewBox="0 0 17 16" fill="none" stroke="#666" stroke-width="1.200"><path d="M.6.6h15.800v14.800H.6zM4.500.6v14.800M4.500 11h12M7.500 4h6v4h-6z"/></svg></button>
    <button aria-label="幻灯片浏览" class="w-[49px] flex justify-center"><svg class="w-4 h-4" viewBox="0 0 16 16" fill="none" stroke="#777" stroke-width="1.200"><path d="M.6 1.600h5.800v4.800H.6zM9.600 1.600h5.800v4.800H9.600zM.6 10h5.800v4.800H.6zM9.600 10h5.800v4.800H9.600z"/></svg></button>
    <button aria-label="阅读视图" class="w-[50px] flex justify-center"><svg class="w-[17px] h-4" viewBox="0 0 17 16" fill="none" stroke="#777" stroke-width="1.200"><path d="M8.500 2C7 .8 5 .8.600.8v12.500c4 0 6 0 7.900 1.400 1.900-1.400 3.900-1.400 7.900-1.400V.8c-4.400 0-6.400 0-7.900 1.200zM8.500 2v13.500"/><path d="M2.500 4H7M2.500 6.500H7M2.500 9H7M2.500 11.300H7M10 4h4.500M10 6.500h4.500M10 9h4.500M10 11.300h4.500" stroke-width="1"/></svg></button>
    <button aria-label="幻灯片放映" class="w-[50px] flex justify-center"><svg class="w-[17px] h-4" viewBox="0 0 17 16" fill="none" stroke="#777" stroke-width="1.200"><path d="M0 1.200h17" stroke-width="2"/><path d="M2.500 2v7.500h12V2M5 5h7M8.500 9.500V15M5.500 15.200h6"/></svg></button>
    <button aria-label="缩小" class="ml-[7px]"><svg class="w-[11px] h-[11px] block" viewBox="0 0 11 11" stroke="#444" stroke-width="1.200"><path d="M0 5.500h11"/></svg></button>
    <div class="relative ml-[6px] w-[125px] h-4 flex items-center">
      <span class="absolute left-[62px] top-[5px] w-px h-[7px] bg-[#ababab]"></span>
      <input type="range" min="0" max="100" value="25" aria-label="缩放" class="relative appearance-none w-full h-4 bg-transparent [&::-webkit-slider-runnable-track]:h-px [&::-webkit-slider-runnable-track]:bg-[#ababab] [&::-webkit-slider-thumb]:appearance-none [&::-webkit-slider-thumb]:w-[6px] [&::-webkit-slider-thumb]:h-[14px] [&::-webkit-slider-thumb]:-mt-[7px] [&::-webkit-slider-thumb]:bg-[#666]">
    </div>
    <button aria-label="放大" class="ml-[6px]"><svg class="w-[11px] h-[11px] block" viewBox="0 0 11 11" stroke="#444" stroke-width="1.200"><path d="M0 5.500h11M5.500 0v11"/></svg></button>
    <button class="ml-4 w-[31px] text-left">55%</button>
    <button aria-label="按窗口大小调整" class="ml-[17px]"><svg class="w-[14px] h-[14px] block" viewBox="0 0 14 14" fill="none" stroke="#555" stroke-width="1.100"><path d="M.6.6h12.800v12.800H.6z"/><path d="M7 2v3M5.800 3 7 1.800 8.200 3M7 12V9M5.800 11 7 12.200 8.200 11M2 7h3M3 5.800 1.800 7 3 8.200M12 7H9M11 5.800 12.200 7 11 8.200"/></svg></button>
  </div>
</footer>
</div>
</body>
</html>
